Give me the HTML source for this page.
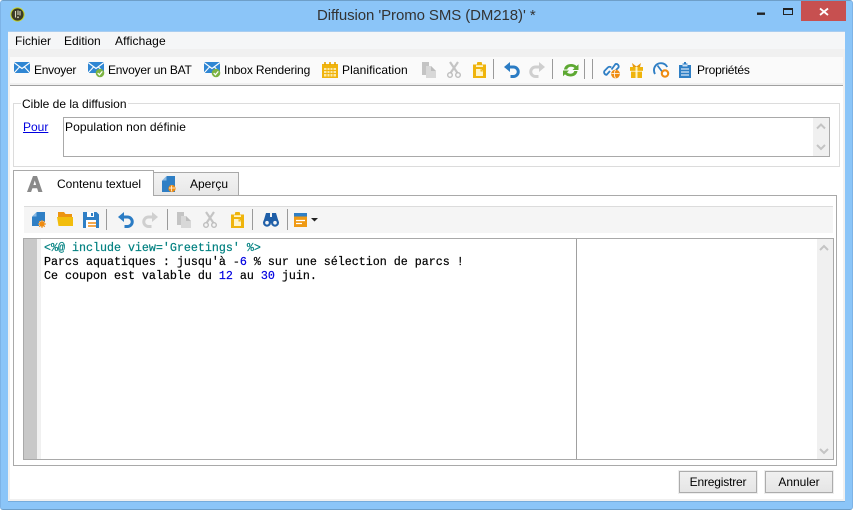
<!DOCTYPE html>
<html><head><meta charset="utf-8">
<style>
html,body{margin:0;padding:0;background:#fff}
body{width:858px;height:518px;overflow:hidden;position:relative;font-family:"Liberation Sans",sans-serif;font-size:12px;color:#000}
div,span,a{position:absolute;box-sizing:border-box;white-space:nowrap}
svg{position:absolute;left:0;top:0}
.t{line-height:14px}
.code{font-family:"Liberation Mono",monospace;font-size:11.67px;line-height:14px;left:44px;-webkit-text-stroke:.2px currentColor}
.b{color:#0000e0}.g{color:#008080}
.btn{background:linear-gradient(#f0f0f0,#e5e5e5);border:1px solid #acacac;text-align:center;line-height:20px;box-shadow:0 0 0 1px #eee}
</style></head><body>
<div style="left:0;top:0;width:853px;height:510px;background:#8bc5f8;border:1px solid #7db3e6;border-top-color:#6e9fc9;border-bottom-color:#6e9fc9;border-radius:3px"></div>
<div style="left:8px;top:31px;width:837px;height:471px;background:#fff;border-bottom:1px solid #76acdc"></div>
<div style="left:8px;top:31px;width:837px;height:1px;background:#a9cdf0"></div>
<div style="left:8px;top:32px;width:837px;height:17px;background:#f5f6f7"></div>
<div style="left:8px;top:49px;width:837px;height:8px;background:#f0f0f0"></div>
<div style="left:8px;top:57px;width:2px;height:444px;background:#f0f0f0"></div>
<div style="left:843px;top:57px;width:2px;height:444px;background:#f0f0f0"></div>
<div style="left:8px;top:499px;width:837px;height:2px;background:#f0f0f0"></div>
<div style="left:10px;top:57px;width:833px;height:26px;background:#fafafa"></div>
<div style="left:10px;top:83px;width:833px;height:2px;background:#f0f0f0"></div>
<div style="left:10px;top:85px;width:833px;height:1px;background:#a0a0a0"></div>

<!-- title bar -->
<div class="t" style="left:317px;top:7px;font-size:15px;letter-spacing:-.09px;line-height:18px;color:#333">Diffusion 'Promo SMS (DM218)' *</div>
<div style="left:801px;top:1px;width:45px;height:20px;background:#c75050"></div>

<!-- menu -->
<div class="t" style="left:15px;top:34px">Fichier</div>
<div class="t" style="left:64px;top:34px">Edition</div>
<div class="t" style="left:115px;top:34px;letter-spacing:.1px">Affichage</div>

<!-- toolbar labels -->
<div class="t" style="left:34px;top:63px;letter-spacing:-.28px">Envoyer</div>
<div class="t" style="left:108px;top:63px;letter-spacing:-.2px">Envoyer un BAT</div>
<div class="t" style="left:224px;top:63px;letter-spacing:-.13px">Inbox Rendering</div>
<div class="t" style="left:342px;top:63px;letter-spacing:.08px">Planification</div>
<div class="t" style="left:697px;top:63px;letter-spacing:-.2px">Propriétés</div>

<!-- fieldset -->
<div style="left:13px;top:103px;width:827px;height:64px;border:1px solid #dcdcdc"></div>
<div class="t" style="left:21px;top:97px;background:#fff;padding:0 1px 0 1px">Cible de la diffusion</div>
<a class="t" style="left:23px;top:120px;color:#0000e0;text-decoration:underline">Pour</a>
<div style="left:63px;top:117px;width:767px;height:40px;border:1px solid #a9a9a9;background:#fff"></div>
<div style="left:813px;top:118px;width:16px;height:38px;background:#f0f0f0"></div>
<div class="t" style="left:65px;top:120px;letter-spacing:.1px">Population non définie</div>

<!-- tab panel -->
<div style="left:13px;top:195px;width:824px;height:271px;border:1px solid #a9a9a9;background:#fff"></div>
<div style="left:153px;top:172px;width:86px;height:24px;border:1px solid #a9a9a9;background:linear-gradient(#f3f3f3,#e8e8e8)"></div>
<div style="left:13px;top:170px;width:141px;height:26px;border:1px solid #a9a9a9;border-bottom:0;background:#fff"></div>
<div class="t" style="left:57px;top:177px">Contenu textuel</div>
<div class="t" style="left:190px;top:177px">Aperçu</div>

<!-- inner toolbar -->
<div style="left:24px;top:206px;width:809px;height:27px;background:#f5f5f5;border-top:1px solid #dcdcdc"></div>

<!-- editor -->
<div style="left:23px;top:238px;width:811px;height:222px;border:1px solid #a9a9a9;background:#fff"></div>
<div style="left:24px;top:239px;width:13px;height:220px;background:#c8c8c8"></div>
<div style="left:37px;top:239px;width:4px;height:220px;background:#f0f0f0"></div>
<div style="left:576px;top:239px;width:1px;height:220px;background:#a0a0a0"></div>
<div style="left:817px;top:239px;width:16px;height:220px;background:#f0f0f0"></div>
<div class="code g" style="top:241px">&lt;%@ include view='Greetings' %&gt;</div>
<div class="code" style="top:255px">Parcs aquatiques : jusqu'à -<span class="b" style="position:static">6</span> % sur une sélection de parcs !</div>
<div class="code" style="top:269px">Ce coupon est valable du <span class="b" style="position:static">12</span> au <span class="b" style="position:static">30</span> juin.</div>

<!-- buttons -->
<div class="btn" style="left:679px;top:471px;width:78px;height:22px;letter-spacing:-.18px">Enregistrer</div>
<div class="btn" style="left:765px;top:471px;width:68px;height:22px">Annuler</div>

<svg width="858" height="518" viewBox="0 0 858 518">
<defs>
<g id="mail"><rect x="0" y="0" width="16" height="11" fill="#2f86d3"/><path d="M0 0.5L8 6.5L16 0.5M0 11L5.500 5M16 11L10.500 5" fill="none" stroke="#fff" stroke-width="1.100"/></g>
<g id="ok"><circle cx="0" cy="0" r="4.300" fill="#7cb342"/><path d="M-2.300 0L-.6 1.800L2.300-1.600" fill="none" stroke="#fff" stroke-width="1.200"/></g>
<g id="copy"><path d="M0 0H7V13H0Z" fill="#c4c4c4"/><path d="M4 4H9L14 9V16H4Z" fill="#d8d8d8"/><path d="M9 4V9H14Z" fill="#bdbdbd"/></g>
<g id="cut"><path d="M3 0L10.500 11M11 0L3.500 11" stroke="#c4c4c4" stroke-width="2.200" fill="none"/><circle cx="3" cy="13" r="2.300" fill="none" stroke="#bdbdbd" stroke-width="1.400"/><circle cx="11" cy="13" r="2.300" fill="none" stroke="#bdbdbd" stroke-width="1.400"/></g>
<g id="paste"><path d="M0 2.500H4V1A1 1 0 0 1 5 0H8A1 1 0 0 1 9 1V2.500H13V16H0Z" fill="#efb40c"/><rect x="3" y="3.200" width="7" height="1.800" fill="#fff3c0"/><path d="M3 7H8L10 9V14H3Z" fill="#fff4c8"/><path d="M7.500 7V9.500H10Z" fill="#efb40c"/></g>
</defs>

<!-- app icon -->
<circle cx="17.500" cy="14.500" r="6.600" fill="#3a3a28" stroke="#c9d41f" stroke-width="1"/>
<path d="M15.500 11V17.500M18 10.500V15M20 11V15.500" stroke="#d8d8c0" stroke-width="1.100" fill="none"/>
<circle cx="18" cy="17.300" r=".9" fill="#d8d8c0"/>

<!-- window controls -->
<rect x="757" y="12.500" width="8" height="2.400" fill="#222"/>
<rect x="783.500" y="8.500" width="9" height="6" fill="none" stroke="#222" stroke-width="1"/><rect x="783" y="8" width="10" height="2" fill="#222"/>
<path d="M820 8.500L828 15M828 8.500L820 15" stroke="#fff" stroke-width="1.800" fill="none"/>

<!-- main toolbar -->
<use href="#mail" x="14" y="62"/>
<use href="#mail" x="88" y="62"/><use href="#ok" x="100" y="73"/>
<use href="#mail" x="204" y="62"/><use href="#ok" x="216" y="73"/>
<g transform="translate(322,62)"><path d="M0 2H16V16H0Z" fill="#f0b40e"/><path d="M3 0V3M8 0V3M13 0V3" stroke="#e6a400" stroke-width="1.600"/><path d="M2 6H14V14.500H2Z" fill="#fbe9a8"/><path d="M2 8.500H14M2 11.500H14M5 6V15M8 6V15M11 6V15" stroke="#f0b40e" stroke-width="1"/></g>
<use href="#copy" x="422" y="62"/>
<use href="#cut" x="447" y="62"/>
<use href="#paste" x="473" y="62"/>
<rect x="493" y="59" width="1" height="20" fill="#9a9a9a"/>
<g transform="translate(504,62)"><path d="M0 5L6 0V10Z" fill="#2b7cc4"/><path d="M5 5H9.500A4.700 4.700 0 0 1 9.500 14.500H6.500" fill="none" stroke="#2b7cc4" stroke-width="3"/></g>
<g transform="translate(545,62) scale(-1,1)"><path d="M0 5L6 0V10Z" fill="#cfcfcf"/><path d="M5 5H9.500A4.700 4.700 0 0 1 9.500 14.500H6.500" fill="none" stroke="#cfcfcf" stroke-width="3"/></g>
<rect x="552" y="59" width="1" height="20" fill="#9a9a9a"/>
<g transform="translate(563,63)" fill="#5da832"><path d="M1 6.500C1.500 2.800 4.500 1 8 1C10.500 1 12.500 2 13.500 3.100L15.500 1.300V7H9.500L11.500 5C10.500 4.200 9.500 3.800 8 3.800C6 3.800 4.700 4.800 4.200 6.500Z"/><path d="M14.500 8C14 11.700 11 13.500 7.500 13.500C5 13.500 3 12.500 2 11.400L0 13.200V7.500H6L4 9.500C5 10.300 6 10.700 7.500 10.700C9.500 10.700 10.800 9.700 11.300 8Z"/></g>
<rect x="584" y="59" width="1" height="20" fill="#9a9a9a"/>
<rect x="592" y="59" width="1" height="20" fill="#9a9a9a"/>
<g transform="translate(603,62)"><path d="M7 9L3.600 12.800A2.600 2.600 0 0 1 1.400 9L4.800 5.500A2.600 2.600 0 0 1 8.300 5.500M8.500 7.500L12.500 2A2.600 2.600 0 0 1 15.500 5.500L12.500 8.500" fill="none" stroke="#2f7fc5" stroke-width="1.800"/><circle cx="12.500" cy="12" r="4.400" fill="#ef8c12"/><path d="M8.500 11.500H16.500M12.500 7.800C11 10 11 14 12.500 16.200" stroke="#fff" stroke-width=".8" fill="none"/></g>
<g transform="translate(630,62)"><path d="M2 1L6.500 4.500L11 1L10 5H3Z" fill="#e89a10"/><path d="M0 5H13V9H0Z" fill="#efb40c"/><path d="M1 9.500H12V16H1Z" fill="#efb40c"/><path d="M5.500 5H7.500V16H5.500Z" fill="#fff3c0"/><path d="M0 9.200H13" stroke="#fff" stroke-width=".7"/></g>
<g transform="translate(653,62)"><path d="M2 12C-.8 6.800 2.500 1.200 8 1.200C10.800 1.200 13 2.600 14.200 5" fill="none" stroke="#2f7fc5" stroke-width="1.900"/><path d="M4.500 3.500L9 9.500" stroke="#2f7fc5" stroke-width="1.700"/><circle cx="12" cy="11.500" r="3.200" fill="#fff" stroke="#ef8c12" stroke-width="2.100"/></g>
<g transform="translate(679,62)"><path d="M0 3H3.500V1.500H5V0H7V1.500H8.500V3H12V16H0Z" fill="#2f7fc5"/><rect x="3.500" y="2.500" width="5" height="2" fill="#cfe3f5"/><path d="M2 7H10M2 10H10M2 13H10" stroke="#d8e8f6" stroke-width="1.300"/></g>

<!-- tab icons -->
<path fill-rule="evenodd" d="M27 192L33 176H37L42.500 192H38.300L37.100 188.200H32.400L31.100 192ZM33.400 185H36.100L34.800 180.500Z" fill="#8a8a8a"/>
<g transform="translate(162,176)"><path d="M5 0H13V16H0V5Z" fill="#2f7fc5"/><path d="M0 4.500L4.500 0V4.500Z" fill="#8ab9e2"/><circle cx="10" cy="12.500" r="3.600" fill="#ef8c12"/><path d="M7 12H13M10 9.500C9 11 9 14 10 15.500" stroke="#fff" stroke-width=".7" fill="none"/></g>

<!-- inner toolbar icons -->
<g transform="translate(32,212)"><path d="M5 0H13V14H0V5Z" fill="#2f7fc5"/><path d="M0 4.500L4.500 0V4.500Z" fill="#8ab9e2"/><circle cx="10" cy="12" r="3" fill="#ef8c12" stroke="#f5f5f5" stroke-width=".6"/><path d="M10 8V16M6 12H14M7.200 9.200L12.800 14.800M12.800 9.200L7.200 14.800" stroke="#ef8c12" stroke-width="1"/></g>
<g transform="translate(57,212)"><path d="M1 0H7L8.500 2H15V5H1Z" fill="#ed9410"/><path d="M0 5H16V14H1.500Z" fill="#f2bd0c"/></g>
<g transform="translate(83,212)"><path d="M0 0H13.500L16 2.500V16H0Z" fill="#2f7fc5"/><rect x="4" y="0" width="7" height="5" fill="#fff"/><rect x="8" y="1" width="2" height="3" fill="#2f7fc5"/><rect x="3" y="8" width="10" height="8" fill="#fff"/><path d="M5 11H13M5 14H13" stroke="#ef8c12" stroke-width="1.500"/></g>
<rect x="106" y="209" width="1" height="21" fill="#9a9a9a"/>
<g transform="translate(118,212)"><path d="M0 5L6 0V10Z" fill="#2b7cc4"/><path d="M5 5H9.500A4.700 4.700 0 0 1 9.500 14.500H6.500" fill="none" stroke="#2b7cc4" stroke-width="3"/></g>
<g transform="translate(158,212) scale(-1,1)"><path d="M0 5L6 0V10Z" fill="#cfcfcf"/><path d="M5 5H9.500A4.700 4.700 0 0 1 9.500 14.500H6.500" fill="none" stroke="#cfcfcf" stroke-width="3"/></g>
<rect x="167" y="209" width="1" height="21" fill="#9a9a9a"/>
<use href="#copy" x="177" y="212"/>
<use href="#cut" x="203" y="212"/>
<use href="#paste" x="231" y="212"/>
<rect x="252" y="209" width="1" height="21" fill="#9a9a9a"/>
<g transform="translate(263,213)" fill="#1f5fa8"><path d="M3 0H7V4H9V0H13L16 10H0Z"/><circle cx="4" cy="9.700" r="4"/><circle cx="12" cy="9.700" r="4"/><circle cx="4" cy="9.700" r="1.800" fill="#f5f5f5"/><circle cx="12" cy="9.700" r="1.800" fill="#f5f5f5"/></g>
<rect x="287" y="209" width="1" height="21" fill="#9a9a9a"/>
<g transform="translate(294,213)"><rect x="0" y="0" width="13" height="3.500" fill="#2f7fc5"/><rect x="0" y="3.500" width="13" height="10.500" fill="#ef9a14"/><path d="M2 7.500H11M2 10.500H8" stroke="#fff" stroke-width="1.300"/></g>
<path d="M311 218H318L314.500 221.500Z" fill="#222"/>

<!-- scrollbar arrows -->
<g fill="none" stroke="#c4c4c4" stroke-width="2">
<path d="M817 128.500L821 124.500L825 128.500"/>
<path d="M817 145L821 149L825 145"/>
<path d="M820 250L824 246L828 250"/>
<path d="M820 449L824 453L828 449"/>
</g>
</svg>
</body></html>
